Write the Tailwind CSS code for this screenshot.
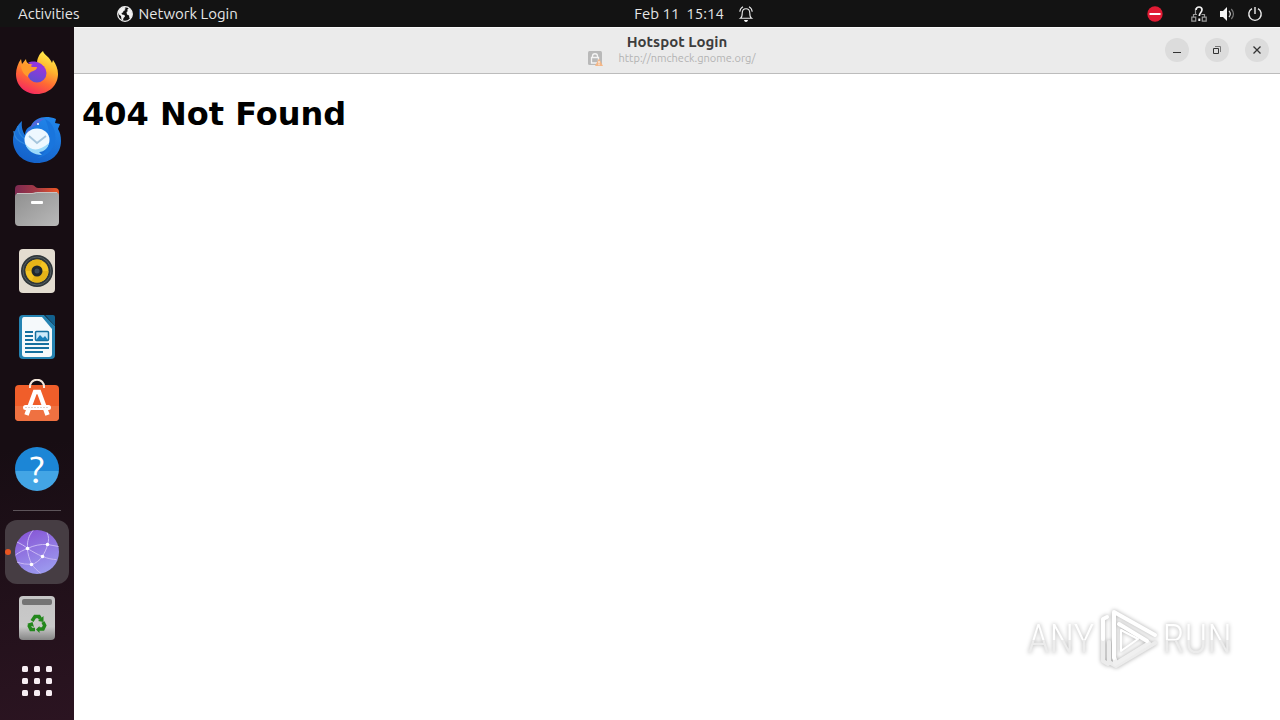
<!DOCTYPE html>
<html lang="en">
<head>
    <meta charset="UTF-8">
    <meta name="viewport" content="width=device-width, initial-scale=1.0">
    <title>Hotspot Login</title>
    <script src="https://cdn.jsdelivr.net/npm/@tailwindcss/browser@4"></script>
</head>
<body class="bg-white font-['Ubuntu','Noto_Sans',sans-serif]">
    <div class="flex flex-col h-screen overflow-hidden">

        <!-- top bar -->
        <header class="grid grid-cols-[1fr_auto_1fr] items-center h-[27px] shrink-0 bg-[#131313] text-[#e6e6e6] text-[15px] leading-5">
            <div class="flex items-center pl-[18px] gap-[37px]">
                <button>Activities</button>
                <button class="flex items-center gap-1.5">
                    <svg class="size-4" viewBox="0 0 16 16">
                        <circle cx="8" cy="8" r="7.3" fill="none" stroke="#f2f2f2" stroke-width="1.3"/>
                        <path d="M1 6 3.500 2.500 7 .8 9 2 7.500 3 8.500 4 6.500 5 6 6.500 4.500 7 5 8.500 7.500 9 8 10.500 6.500 12 6 14.500 4.500 13.500 4 10 2 8.500zM10 4l2-2 2.500 3 .8 4-1.300 3-1.500.5-.5-3L10 8.500 9.500 6 11 5z" fill="#f2f2f2"/>
                    </svg>
                    Network Login
                </button>
            </div>
            <button class="flex items-center gap-3.5 pl-[108px]">
                <span class="whitespace-pre">Feb 11  15:14</span>
                <svg class="size-4" viewBox="0 0 16 16" fill="none" stroke="#ececec" stroke-width="1.100">
                    <path d="M2.500 12.300c1.500-1 1.700-2.300 1.700-5C4.200 4.300 5.500 2.700 8 2.700s3.800 1.600 3.800 4.600c0 2.700.2 4 1.700 5zM5 .8C3 1.800 2 3.300 1.800 5.800M11 .8c2 1 3 2.500 3.200 5"/>
                    <path d="M6 14h4c-.3 1.300-1 2-2 2s-1.700-.7-2-2z" fill="#fff" stroke="none"/>
                </svg>
            </button>
            <div class="flex items-center justify-end pr-[17px] gap-3">
                <svg class="size-4 mr-4" viewBox="0 0 16 16">
                    <circle cx="8" cy="8" r="7.700" fill="#e01b34"/>
                    <path d="M2.500 7h11v2h-11z" fill="#fff"/>
                </svg>
                <svg class="size-4" viewBox="0 0 16 16" fill="none">
                    <path d="M.8 11.200h3.900v4H.8zM11.300 11.200h3.900v4h-3.900zM2.500 11V8.500H6M10.500 8.500h3V11M4.500 8V3H6" stroke="#9a9a9a" stroke-width="1.200"/>
                    <path d="M5 3.800C5.200 2 6.300 1 8 1s3 1 3 2.800C11 6.500 8.300 6.500 8.300 10" stroke="#f2f2f2" stroke-width="1.700"/>
                    <path d="M7.300 12.500h2v2.500h-2z" fill="#f2f2f2"/>
                </svg>
                <svg class="size-4" viewBox="0 0 16 16" fill="none">
                    <path d="M1 5h3l4-4v14l-4-4H1z" fill="#f5f5f5"/>
                    <path d="M10 5c1.600 1.800 1.600 4.200 0 6" stroke="#d5d5d5" stroke-width="1.200"/>
                    <path d="M12.300 3c2.600 3 2.600 7 0 10" stroke="#777" stroke-width="1.200"/>
                </svg>
                <svg class="size-4" viewBox="0 0 16 16" fill="none" stroke="#ededed" stroke-width="1.400">
                    <path d="M5 2.700a6.200 6.200 0 1 0 6 0M8 1v7"/>
                </svg>
            </div>
        </header>

        <div class="flex flex-1 min-h-0">

            <!-- dock -->
            <nav class="flex flex-col items-center w-[74px] shrink-0 pt-3.5 gap-0.5 bg-linear-[170deg] from-[#170d13] from-60% to-[#2b1421]">
                <button class="flex items-center justify-center size-16 shrink-0" aria-label="Firefox">
                    <svg class="size-12" viewBox="0 0 48 48">
                        <defs>
                            <linearGradient id="fox" x1=".75" y1="0" x2=".3" y2="1">
                                <stop offset="0" stop-color="#fff44f"/>
                                <stop offset=".35" stop-color="#ffb52e"/>
                                <stop offset=".65" stop-color="#ff6a33"/>
                                <stop offset="1" stop-color="#f52662"/>
                            </linearGradient>
                            <linearGradient id="foxglobe" x1=".7" y1="0" x2=".3" y2="1">
                                <stop offset="0" stop-color="#a033e0"/>
                                <stop offset="1" stop-color="#5c4ed0"/>
                            </linearGradient>
                        </defs>
                        <path d="M30 2c-4 3-6 8-6 12-3-1-6 0-8 1-2-1-3-3-3-5l-4 5-1-5c-3 4-5 10-5 15 0 12 9 20 21 20s21-9 21-20c0-5-2-10-5-14l-1 3c-2-6-8-8-9-12z" fill="url(#fox)"/>
                        <circle cx="24" cy="24" r="9.500" fill="url(#foxglobe)"/>
                        <path d="M15 14c5-3 14-1 16 5-2-2-4-2-6-1z" fill="#9136dd"/>
                        <path d="M8 16c4-2 8-1 11 2h5c0 3-4 4-6 5-2 1-3 3-3 5-4-2-7-7-7-12z" fill="#ff9a2b"/>
                    </svg>
                </button>
                <button class="flex items-center justify-center size-16 shrink-0" aria-label="Thunderbird">
                    <svg class="size-12" viewBox="0 0 48 48">
                        <defs>
                            <linearGradient id="bird" x1=".7" y1="0" x2=".3" y2="1">
                                <stop offset="0" stop-color="#2185ea"/>
                                <stop offset="1" stop-color="#1461c9"/>
                            </linearGradient>
                        </defs>
                        <path d="M9 6c-5 4-9 12-9 19 0 13 10 23 24 23s24-9 24-22c0-5-1-9-3-12l2-5-5-1 1-4C33 0 22 2 18 11c-3 1-6 4-6 9-2-3-4-8-3-14z" fill="url(#bird)"/>
                        <path d="M1 16c0 7 4 10 11 13M5 11c0 6 2 10 7 13" fill="none" stroke="#2f86dd" stroke-width="1.200"/>
                        <path d="M17 14c2-7 8-11 15-10-6 2-7 6-11 7-3 1-5 6-7 9-1-3 1-5 3-6z" fill="#5368db"/>
                        <path d="M32 4c7 3 12 12 10 23-2 9-10 15-18 16 12-6 17-20 8-39z" fill="#1975dd"/>
                        <ellipse cx="24" cy="25" rx="12.500" ry="11.500" fill="#eef8ff"/>
                        <path d="M12 28c5 8 14 9 24 0-1 6-6 9-10 9l3 3c-8 0-15-4-17-12z" fill="#9bdafa"/>
                        <path d="m16 21 8 7 9-7" fill="none" stroke="#a6c6dd" stroke-width="1.800"/>
                        <circle cx="25" cy="9" r="1" fill="#fff"/>
                    </svg>
                </button>
                <button class="flex items-center justify-center size-16 shrink-0" aria-label="Files">
                    <svg class="size-12" viewBox="0 0 48 48">
                        <defs>
                            <linearGradient id="tab">
                                <stop offset="0" stop-color="#7c2951"/>
                                <stop offset=".5" stop-color="#a43a45"/>
                                <stop offset="1" stop-color="#ef5724"/>
                            </linearGradient>
                            <linearGradient id="folder" x1="0" y1="0" x2="1" y2="1">
                                <stop offset="0" stop-color="#8f8f8f"/>
                                <stop offset="1" stop-color="#b9b9b9"/>
                            </linearGradient>
                        </defs>
                        <path d="M2 20V8q0-4 4-4h13c3 0 3 3 6 3h17q4 0 4 4v9z" fill="url(#tab)"/>
                        <path d="M6 12h13c3 0 3-1 6-1h17q4 0 4 4v26q0 4-4 4H6q-4 0-4-4V16q0-4 4-4z" fill="url(#folder)"/>
                        <path d="M4 12.500h15c3 0 3-1 6-1h19" fill="none" stroke="#c9c2c2"/>
                        <rect x="18" y="20" width="12" height="3" rx="1" fill="#fff"/>
                    </svg>
                </button>
                <button class="flex items-center justify-center size-16 shrink-0" aria-label="Rhythmbox">
                    <svg class="size-12" viewBox="0 0 48 48">
                        <rect x="6" y="2" width="36" height="44" rx="4" fill="#e3dcd0"/>
                        <circle cx="24" cy="24" r="16" fill="#2f3639"/>
                        <circle cx="24" cy="24" r="14" fill="none" stroke="#566064"/>
                        <circle cx="24" cy="24" r="11.500" fill="#f4c423"/>
                        <path d="M12.500 24a11.500 11.500 0 0 1 17-10L24 24zM35.500 24a11.500 11.500 0 0 1-17 10L24 24z" fill="#e5b318"/>
                        <circle cx="24" cy="24" r="5.500" fill="#20272c"/>
                        <circle cx="24" cy="24" r="2.500" fill="#3b4a57"/>
                    </svg>
                </button>
                <button class="flex items-center justify-center size-16 shrink-0" aria-label="LibreOffice Writer">
                    <svg class="size-12" viewBox="0 0 48 48">
                        <path d="M10 2h21l11 11v29q0 4-4 4H10q-4 0-4-4V6q0-4 4-4z" fill="#2583b2"/>
                        <path d="M11 4h18l10 12v25q0 3-3 3H12q-3 0-3-3V7q0-3 2-3z" fill="#f5f9fb"/>
                        <path d="M32 2h8q2 0 2 2v9z" fill="#12608d"/>
                        <path d="M12 19h8M12 23h8M12 27h8M12 31h24M12 35h24M12 39h18" stroke="#15709f" stroke-width="2"/>
                        <rect x="22.500" y="18.500" width="13" height="9" rx="1" fill="#cdeafa" stroke="#15709f" stroke-width="1.500"/>
                        <path d="m23 27 4-5 3 3 2-2 3 4z" fill="#1980ba"/>
                    </svg>
                </button>
                <button class="flex items-center justify-center size-16 shrink-0" aria-label="Ubuntu Software">
                    <svg class="size-12" viewBox="0 0 48 48">
                        <rect x="2" y="6" width="44" height="36" rx="4" fill="#f05e2a"/>
                        <path d="M2 27h44v11q0 4-4 4H6q-4 0-4-4z" fill="#ef7141"/>
                        <path d="M17 9C16 -2 32 -2 31 9" fill="none" stroke="#f7e8dc" stroke-width="2"/>
                        <path d="m13.500 36 8.500-23h4l8.500 23" fill="none" stroke="#fff" stroke-width="4.500"/>
                        <rect x="10" y="26" width="28" height="5" rx="2.500" fill="#fff"/>
                        <path d="M12 28.500h24" stroke="#ddd5d0" stroke-dasharray="2 1"/>
                    </svg>
                </button>
                <button class="flex items-center justify-center size-16 shrink-0" aria-label="Help">
                    <span class="flex items-center justify-center size-11 rounded-full bg-linear-to-b from-[#1c86d6] from-55% to-[#43a5e5] to-55% text-white text-[38px] leading-none">?</span>
                </button>
                <hr class="w-12 my-[7px] shrink-0 border-[#5d545a]">
                <button class="relative flex items-center justify-center size-16 shrink-0 rounded-xl bg-[#463d43]" aria-label="Network Login">
                    <span class="absolute left-0 size-1.5 rounded-full bg-[#e95420]"></span>
                    <svg class="size-12" viewBox="0 0 48 48">
                        <defs>
                            <linearGradient id="web" x1=".3" y1="0" x2=".7" y2="1">
                                <stop offset="0" stop-color="#8757d6"/>
                                <stop offset="1" stop-color="#9d9df0"/>
                            </linearGradient>
                        </defs>
                        <circle cx="24" cy="24" r="22" fill="url(#web)"/>
                        <path d="M20 2.500C16 7 14 13 14.500 20c0 6 2 11 4 16 3 4 6 7 9 9M34 4.500c2 4 2 8 .5 12-1 5-3 8-5 12-3 4-7 7-11 8M2.500 27c4-3 8-5 12-6.500 6-3 13-4.500 20-4l11 2M14.500 20.500c5 3 10 6 15 8 5 2 10 3 14 3M4 34c5 2 10 2.500 14.500 2M4 14c4 2 8 4 10.500 6.500" fill="none" stroke="#c9b8f4"/>
                        <g fill="#fff">
                            <circle cx="14.500" cy="20.500" r="1.800"/>
                            <circle cx="34.500" cy="16.500" r="1.800"/>
                            <circle cx="29.500" cy="28.500" r="1.800"/>
                            <circle cx="18.500" cy="36.500" r="1.800"/>
                        </g>
                    </svg>
                </button>
                <button class="flex items-center justify-center size-16 shrink-0" aria-label="Trash">
                    <svg class="size-12" viewBox="0 0 48 48">
                        <defs>
                            <linearGradient id="bin" x1="0" y1="0" x2="0" y2="1">
                                <stop offset="0" stop-color="#c5c5c5"/>
                                <stop offset=".7" stop-color="#c9c9c9"/>
                                <stop offset="1" stop-color="#858585"/>
                            </linearGradient>
                        </defs>
                        <rect x="6" y="2" width="36" height="44" rx="4" fill="url(#bin)"/>
                        <rect x="9" y="5" width="30" height="6" rx="2" fill="#747474"/>
                        <g fill="none" stroke="#23871c" stroke-width="3.500">
                            <path d="m19 27 3-4.500h4l1.500 2.500"/>
                            <path d="m30 28 1.700 3.500-1.700 3.500h-4"/>
                            <path d="M22 35.500h-4l-1.700-3.500 1.200-2"/>
                        </g>
                        <path d="m25 27 5.500 1v-6zM26.500 32v7l-3.500-3.500zM14 30l5.500-2 1.500 5z" fill="#23871c"/>
                    </svg>
                </button>
                <button class="flex items-center justify-center w-16 h-[58px] shrink-0" aria-label="Show Applications">
                    <svg class="size-[30px]" viewBox="0 0 30 30" fill="#f7eef3">
                        <rect width="6" height="6" rx="1.500"/><rect x="12" width="6" height="6" rx="1.500"/><rect x="24" width="6" height="6" rx="1.500"/>
                        <rect y="12" width="6" height="6" rx="1.500"/><rect x="12" y="12" width="6" height="6" rx="1.500"/><rect x="24" y="12" width="6" height="6" rx="1.500"/>
                        <rect y="24" width="6" height="6" rx="1.500"/><rect x="12" y="24" width="6" height="6" rx="1.500"/><rect x="24" y="24" width="6" height="6" rx="1.500"/>
                    </svg>
                </button>
            </nav>

            <!-- window -->
            <div class="flex flex-col flex-1 min-w-0">
                <div class="grid grid-cols-[1fr_auto_1fr] items-center h-[47px] shrink-0 bg-[#ebebeb] border-t border-t-[#f8f8f8] border-b border-b-[#bcbcbc]">
                    <div class="col-start-2 pb-0.5">
                        <h2 class="text-center text-[15px] leading-4 font-bold text-[#3d3d3d]">Hotspot Login</h2>
                        <div class="flex items-center gap-4 pr-3">
                            <svg class="size-4" viewBox="0 0 16 16">
                                <rect x="1" y="1" width="14" height="14" rx="1.500" fill="#b9b9b9"/>
                                <path d="M5.500 7.500V6c0-3 5-3 5 0v1.500M4.500 7.500h7V13h-7z" fill="none" stroke="#f4f4f4" stroke-width="1.300"/>
                                <path d="m12 8.500 4 7.500H8z" fill="#f3b788"/>
                                <path d="M12 11v2.500M12 14.200v1" stroke="#fff"/>
                            </svg>
                            <p class="text-[11px] leading-4 text-[#b3b3b3]">http://nmcheck.gnome.org/</p>
                        </div>
                    </div>
                    <div class="flex justify-end gap-4 pr-[11px] pb-0.5">
                        <button class="flex items-center justify-center size-6 rounded-full bg-[#dcdcdc]" aria-label="Minimize">
                            <svg class="size-4" viewBox="0 0 16 16"><path d="M4 10.500h8" stroke="#333"/></svg>
                        </button>
                        <button class="flex items-center justify-center size-6 rounded-full bg-[#dcdcdc]" aria-label="Restore">
                            <svg class="size-4" viewBox="0 0 16 16" fill="none">
                                <path d="M4.500 6.500h5v5h-5z" stroke="#333"/>
                                <path d="M6 4.500h5.500V10" stroke="#777"/>
                            </svg>
                        </button>
                        <button class="flex items-center justify-center size-6 rounded-full bg-[#dcdcdc]" aria-label="Close">
                            <svg class="size-4" viewBox="0 0 16 16"><path d="m4.500 4.500 7 7m0-7-7 7" stroke="#333" stroke-width="1.300"/></svg>
                        </button>
                    </div>
                </div>
                <main class="relative flex-1 px-2 pt-5 text-black">
                    <h1 class="font-['DejaVu_Sans'] font-bold text-[32px] leading-10">404 Not Found</h1>

                    <!-- watermark -->
                    <div class="absolute right-12 bottom-12 flex items-center gap-1 font-['Roboto_Condensed','Roboto',sans-serif] text-[40px] leading-none font-light drop-shadow-[0_0_2px_#0005]">
                        <span class="bg-linear-to-b from-white from-50% to-[#ececec] to-50% bg-clip-text text-transparent">ANY</span>
                        <svg class="w-[60px] h-16" viewBox="0 0 60 64" fill="none" stroke-width="4" stroke-linejoin="round" stroke-linecap="round">
                            <path d="M4 30v23l5 3M10 34v20l7 4 39-23" stroke="#ececec"/>
                            <path d="M16 51v5l34-21" stroke="#f0f0f0"/>
                            <path d="M8 9 4 11v20" stroke="#fff"/>
                            <path d="M15 50V4l41 23M20 16l28 17" stroke="#fff"/>
                            <path d="m22 22 17 9-17 12z" stroke="#fff" stroke-width="2"/>
                        </svg>
                        <span class="bg-linear-to-b from-white from-50% to-[#ececec] to-50% bg-clip-text text-transparent">RUN</span>
                    </div>
                </main>
            </div>
        </div>
    </div>
</body>
</html>
